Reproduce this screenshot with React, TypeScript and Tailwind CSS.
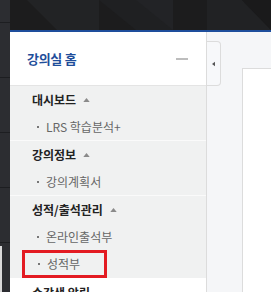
const font = { fontFamily: '"Noto Sans CJK KR", "Noto Sans", sans-serif' };

function Caret() {
  return (
    <svg viewBox="0 0 8 5" className="ml-[7px] w-[7px] h-[4px] fill-[#8a8a8a]">
      <path d="M0 5 L4 0 L8 5 z" />
    </svg>
  );
}

function Item({ label }: { label: string }) {
  return (
    <div className="h-[26px] flex items-center pl-[27px] text-[12px] text-[#666]">
      <span className="w-[2px] h-[2px] bg-[#777] mr-[7px]" />
      {label}
    </div>
  );
}

export default function App() {
  const groups = [
    { title: "대시보드", items: ["LRS 학습분석+"] },
    { title: "강의정보", items: ["강의계획서"] },
  ];

  return (
    <div className="w-[271px] h-[292px] overflow-hidden flex bg-[#f5f6f8]" style={font}>
      {/* left rail */}
      <div className="w-[10px] flex-none flex flex-col bg-[#2c2d31]">
        <div className="h-[23px] border-b border-[#1d1e21]" />
        <div className="h-[55px] border-b border-[#1d1e21]" />
        <div className="h-[55px] border-b border-[#1d1e21]" />
        <div className="h-[55px] border-b border-[#1d1e21]" />
        <div className="h-[55px] border-b border-[#1d1e21]" />
        <div className="flex-1 pt-[3px]">
          <div className="w-[2px] h-full bg-[#d8d8d8]" />
        </div>
      </div>

      <div className="flex-1 flex flex-col min-w-0">
        {/* header */}
        <div className="h-[32px] flex-none bg-[#1c1c1d] border-b-2 border-[#1e4e9c]">
          <svg viewBox="0 0 261 30" className="w-[261px] h-[30px]" preserveAspectRatio="none">
            <polygon points="17,0 89,0 89,30 47,30" fill="#222325" />
            <polygon points="89,0 126,0 126,30" fill="#1f2022" />
            <polygon points="126,0 163,0 163,30 126,30" fill="#222326" />
            <polygon points="126,0 163,30 126,30" fill="#1f2022" />
            <polygon points="197,0 232,0 261,30 197,30" fill="#212224" />
            <polygon points="232,0 261,0 261,30" fill="#1a1a1b" />
          </svg>
        </div>

        <div className="flex flex-1 min-h-0">
          {/* sidebar */}
          <div className="w-[197px] flex-none flex flex-col bg-white border-r border-[#dcdcdc]">
            <div className="h-[54px] flex-none flex items-center justify-between pl-[17px] pr-[18px] border-b border-[#e4e4e4]">
              <span className="text-[13px] font-bold text-[#1f4e9a] tracking-[-0.3px]">강의실 홈</span>
              <span className="w-[12px] h-[2px] bg-[#bdbdbd]" />
            </div>
            <div className="flex flex-col bg-[#f0f1f1]">
              {groups.map((g) => (
                <div key={g.title} className="border-b border-[#fafafa]">
                  <div className="h-[28px] flex items-center pl-[22px] text-[12px] font-bold text-[#222]">
                    {g.title}
                    <Caret />
                  </div>
                  {g.items.map((it) => (
                    <Item key={it} label={it} />
                  ))}
                </div>
              ))}
              <div>
                <div className="h-[28px] flex items-center pl-[22px] text-[12px] font-bold text-[#222]">
                  성적/출석관리
                  <Caret />
                </div>
                <Item label="온라인출석부" />
                <div className="ml-[12px] w-[85px] h-[28px] flex items-center pl-[13px] border-[3px] border-[#e31b22] text-[12px] text-[#666]">
                  <span className="w-[2px] h-[2px] bg-[#777] mr-[7px]" />
                  성적부
                </div>
              </div>
            </div>
            <div className="h-[30px] flex-none flex items-center pl-[22px] text-[12px] font-bold text-[#222]">
              수강생 알림
            </div>
          </div>

          {/* content */}
          <div className="flex-1 flex pt-[9px]">
            <div className="w-[14px] h-[45px] flex-none flex items-center justify-center bg-[#f7f8fa] border border-l-0 border-[#dcdcdc] rounded-r-[4px]">
              <svg viewBox="0 0 4 6" className="w-[3px] h-[6px] fill-[#555]">
                <path d="M4 0 L0 3 L4 6 z" />
              </svg>
            </div>
            <div className="flex-1 mt-[27px] ml-[21px] bg-white border-t border-l border-[#dcdcdc]" />
          </div>
        </div>
      </div>
    </div>
  );
}
